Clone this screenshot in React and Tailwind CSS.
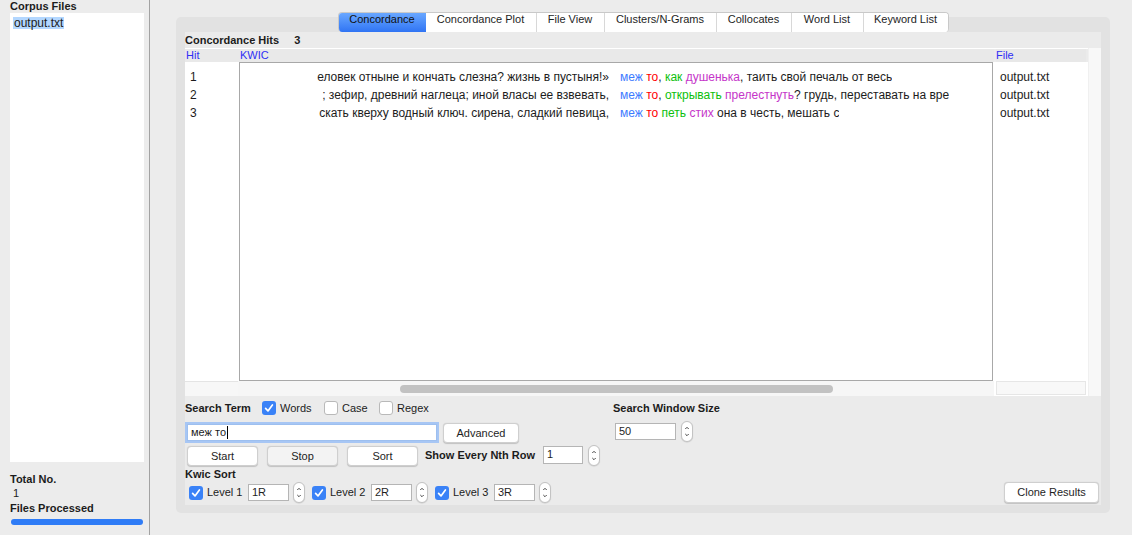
import React from 'react';

const tabs = [
  { label: 'Concordance', w: 'w-[87px]', active: true },
  { label: 'Concordance Plot', w: 'w-[110px]' },
  { label: 'File View', w: 'w-[68px]' },
  { label: 'Clusters/N-Grams', w: 'w-[112px]' },
  { label: 'Collocates', w: 'w-[75px]' },
  { label: 'Word List', w: 'w-[72px]' },
  { label: 'Keyword List', w: 'w-[85px]' },
];

const B = 'text-[#3d7bff]';
const R = 'text-[#ff0000]';
const G = 'text-[#0cbf0c]';
const M = 'text-[#c535c9]';

const rows = [
  {
    left: 'еловек отныне и кончать слезна? жизнь в пустыня!»',
    right: [
      ['меж', B], [' '], ['то', R], [', '], ['как', G], [' '], ['душенька', M],
      [', таить свой печаль от весь'],
    ],
  },
  {
    left: '; зефир, древний наглеца; иной власы ее взвевать,',
    right: [
      ['меж', B], [' '], ['то', R], [', '], ['открывать', G], [' '], ['прелестнуть', M],
      ['? грудь, переставать на вре'],
    ],
  },
  {
    left: 'скать кверху водный ключ. сирена, сладкий певица,',
    right: [
      ['меж', B], [' '], ['то', R], [' '], ['петь', G], [' '], ['стих', M],
      [' она в честь, мешать с'],
    ],
  },
];

const Checkbox = ({ checked }) =>
  checked ? (
    <span className="w-[14px] h-[14px] rounded-[3px] bg-[#3a82f7] flex items-center justify-center shrink-0">
      <svg width="14" height="14" viewBox="0 0 14 14">
        <path d="M3.6 7.4 L6 9.9 L10.4 3.9" fill="none" stroke="white" strokeWidth="1.7" strokeLinecap="round" strokeLinejoin="round" />
      </svg>
    </span>
  ) : (
    <span className="w-[14px] h-[14px] rounded-[3px] bg-white border border-[#b9b9b9] shrink-0" />
  );

const Spinner = () => (
  <span className="w-[12px] h-[21px] rounded-full bg-white border border-[#c3c3c3] flex flex-col items-center justify-center shrink-0 shadow-[0_0.5px_1px_rgba(0,0,0,0.15)]">
    <svg width="10" height="19" viewBox="0 0 10 19">
      <path d="M3.3 7 L5 5.3 L6.7 7" fill="none" stroke="#444" strokeWidth="1" />
      <path d="M3.3 12 L5 13.7 L6.7 12" fill="none" stroke="#444" strokeWidth="1" />
    </svg>
  </span>
);

const Button = ({ children, w, muted }) => (
  <button
    className={`${w} h-[20px] rounded-[4px] border border-[#cfcfcf] text-[11px] leading-[18px] text-[#1e1e1e] shadow-[0_0.5px_1px_rgba(0,0,0,0.18)] ${
      muted ? 'bg-[#f3f3f3]' : 'bg-white'
    }`}
  >
    {children}
  </button>
);

const Field = ({ w, value, h = 'h-[17px]' }) => (
  <span className={`${w} ${h} bg-white border border-[#b5b5b5] text-[11px] leading-[15px] pl-[3px] text-[#1e1e1e] shrink-0`}>
    {value}
  </span>
);

const Level = ({ n }) => (
  <div className="flex items-center">
    <Checkbox checked />
    <span className="w-[41px] ml-[4px] text-[11px]">Level {n}</span>
    <Field w="w-[41px]" value={`${n}R`} />
    <span className="ml-[4px]">
      <Spinner />
    </span>
  </div>
);

const App = () => {
  return (
    <div className="w-[1132px] h-[535px] bg-[#ececec] flex overflow-hidden font-['Liberation_Sans',Arial,sans-serif] text-[#1c1c1c]">
      {/* Corpus panel */}
      <aside className="w-[149px] flex flex-col pl-[10px]">
        <div className="h-[13px] text-[11px] font-bold leading-[13px]">Corpus Files</div>
        <div className="w-[134px] h-[449px] bg-white pt-[4px] pl-[3px]">
          <div className="w-fit bg-[#b3d7ff] text-[12px] leading-[12px] px-px">output.txt</div>
        </div>
        <div className="mt-[10px] h-[14px] text-[11px] font-bold leading-[14px]">Total No.</div>
        <div className="h-[14px] text-[11px] leading-[14px] pl-[3px]">1</div>
        <div className="mt-[1px] h-[14px] text-[11px] font-bold leading-[14px]">Files Processed</div>
        <div className="mt-[4px] ml-px w-[132px] h-[6px] rounded-full bg-[#2f7cf6]" />
      </aside>
      <div className="w-px bg-[#a2a2a2]" />

      {/* Main */}
      <main className="flex-1 pl-[26px] pt-[12px]">
        <div className="w-[934px]">
          <div className="relative z-10 flex justify-center h-[20px]">
            <div className="flex rounded-[4px] overflow-hidden border border-[#c9c9c9] border-b-0 bg-white">
              {tabs.map((t, i) => (
                <div
                  key={t.label}
                  className={`${t.w} h-[20px] text-center text-[11px] leading-[11px] pt-[0.5px] ${
                    t.active
                      ? 'bg-linear-to-b from-[#69a7ff] to-[#2d71f3] text-[#111]'
                      : 'bg-white text-[#1e1e1e] border-l border-[#d8d8d8]'
                  } ${i === 1 ? 'border-l-0' : ''}`}
                >
                  {t.label}
                </div>
              ))}
            </div>
          </div>

          <div className="-mt-[15px] h-[496px] bg-[#e2e2e2] rounded-[5px] pt-[15px] px-[9px] pb-[8px]">
            <div className="h-full bg-[#ebebeb] flex flex-col">
              <div className="mt-[1px] h-[15px] flex items-center text-[11px] font-bold gap-[15px]">
                <span>Concordance Hits</span>
                <span>3</span>
              </div>

              {/* Table */}
              <div className="h-[348px] flex text-[12px]">
                {/* Hit */}
                <div className="w-[53px] flex flex-col">
                  <div className="h-[14px] border-t border-white bg-[#e9e9e9] text-[11px] leading-[13px] text-[#2f2ff5] pl-px">Hit</div>
                  <div className="flex-1 bg-white pt-[6px] pl-[5px]">
                    {rows.map((r, i) => (
                      <div key={i} className="h-[18px] leading-[18px]">{i + 1}</div>
                    ))}
                  </div>
                  <div className="h-[15px] bg-[#f7f7f7] border-t border-[#e4e4e4]" />
                </div>

                {/* KWIC */}
                <div className="w-[756px] flex flex-col bg-white">
                  <div className="h-[14px] border-t border-white bg-[#e9e9e9] text-[11px] leading-[13px] text-[#2f2ff5] pl-[2px]">KWIC</div>
                  <div className="flex-1 mx-px border border-[#a8a8a8] bg-white pt-[5px] overflow-hidden">
                    {rows.map((r, i) => (
                      <div key={i} className="h-[18px] leading-[18px] flex whitespace-nowrap">
                        <div className="w-[369px] text-right overflow-hidden shrink-0">{r.left}</div>
                        <div className="pl-[11px] overflow-hidden">
                          {r.right.map(([txt, c], j) => (
                            <span key={j} className={c || ''}>{txt}</span>
                          ))}
                        </div>
                      </div>
                    ))}
                  </div>
                  <div className="h-[15px] bg-[#f6f6f6] flex items-center">
                    <div className="ml-[162px] w-[433px] h-[8px] rounded-full bg-[#c2c2c2]" />
                  </div>
                </div>

                {/* File */}
                <div className="w-[94px] flex flex-col bg-white">
                  <div className="h-[14px] border-t border-white bg-[#ebebeb] px-[2px]">
                    <div className="h-full bg-[#e8e8e8] text-[11px] leading-[13px] text-[#2f2ff5]">File</div>
                  </div>
                  <div className="flex-1 bg-white pt-[6px] pl-[6px]">
                    {rows.map((r, i) => (
                      <div key={i} className="h-[18px] leading-[18px]">output.txt</div>
                    ))}
                  </div>
                  <div className="h-[15px] px-[2px] bg-white">
                    <div className="h-[14px] bg-[#f8f8f8] border border-[#e6e6e6]" />
                  </div>
                </div>

                {/* vertical scroll track */}
                <div className="w-[13px] bg-[#f8f8f8] border-l border-[#f0f0f0]" />
              </div>

              {/* Controls */}
              <div className="flex-1 flex">
                <div className="w-[428px] flex flex-col">
                  <div className="mt-[5px] h-[14px] flex items-center text-[11px]">
                    <span className="w-[77px] font-bold">Search Term</span>
                    <span className="w-[62px] flex items-center gap-[4px]">
                      <Checkbox checked />
                      Words
                    </span>
                    <span className="w-[55px] flex items-center gap-[4px]">
                      <Checkbox />
                      Case
                    </span>
                    <span className="flex items-center gap-[4px]">
                      <Checkbox />
                      Regex
                    </span>
                  </div>

                  <div className="mt-[7px] h-[20px] flex items-center">
                    <span className="ml-[2px] w-[250px] h-[17px] bg-white border border-[#9dbfef] ring-2 ring-[#a7c6f4] text-[11px] leading-[15px] pl-[3px] flex items-center">
                      меж то<span className="ml-px w-px h-[13px] bg-black" />
                    </span>
                    <span className="ml-[6px]">
                      <Button w="w-[76px]">Advanced</Button>
                    </span>
                  </div>

                  <div className="mt-[3px] h-[20px] flex items-center">
                    <span className="ml-[2px]">
                      <Button w="w-[71px]">Start</Button>
                    </span>
                    <span className="ml-[9px]">
                      <Button w="w-[71px]" muted>Stop</Button>
                    </span>
                    <span className="ml-[9px]">
                      <Button w="w-[71px]">Sort</Button>
                    </span>
                    <span className="ml-[7px] w-[118px] text-[11px] font-bold">Show Every Nth Row</span>
                    <Field w="w-[40px]" value="1" h="h-[18px]" />
                    <span className="ml-[5px]">
                      <Spinner />
                    </span>
                  </div>

                  <div className="mt-[2px] h-[14px] text-[11px] font-bold leading-[14px]">Kwic Sort</div>

                  <div className="mt-px h-[21px] flex items-center pl-[4px] gap-[7px]">
                    <Level n={1} />
                    <Level n={2} />
                    <Level n={3} />
                  </div>
                </div>

                <div className="flex flex-col">
                  <div className="mt-[5px] h-[14px] text-[11px] font-bold leading-[14px]">Search Window Size</div>
                  <div className="mt-[6px] h-[21px] flex items-center pl-[2px]">
                    <Field w="w-[61px]" value="50" />
                    <span className="ml-[5px]">
                      <Spinner />
                    </span>
                  </div>
                </div>

                <div className="flex-1 flex flex-col justify-end items-end pr-[2px] pb-[2px]">
                  <button className="w-[95px] h-[21px] rounded-[4px] border border-[#cfcfcf] bg-white text-[11px] text-[#1e1e1e] shadow-[0_0.5px_1px_rgba(0,0,0,0.18)]">
                    Clone Results
                  </button>
                </div>
              </div>
            </div>
          </div>
        </div>
      </main>
    </div>
  );
};

export default App;
